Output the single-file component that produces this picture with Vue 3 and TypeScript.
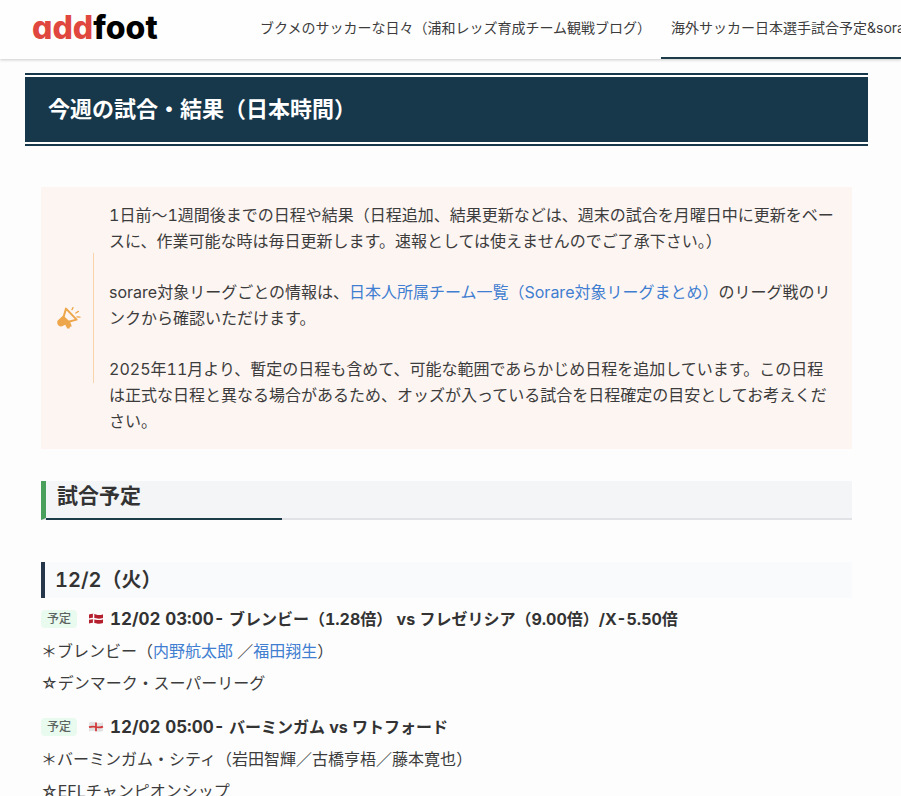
<script setup lang="ts">
interface Player {
  name: string
  href?: string
  after?: string
}

interface Match {
  id: number
  status: string
  flag: 'denmark' | 'england'
  kickoff: string
  title: string
  team: string
  players: Player[]
  league: string
}

const navItems = [
  { label: 'ブクメのサッカーな日々（浦和レッズ育成チーム観戦ブログ）', current: false },
  { label: '海外サッカー日本選手試合予定&sorare', current: true },
]

const matches: Match[] = [
  {
    id: 1,
    status: '予定',
    flag: 'denmark',
    kickoff: '12/02 03:00-',
    title: 'ブレンビー（1.28倍） vs フレゼリシア（9.00倍）/X-5.50倍',
    team: 'ブレンビー',
    players: [
      { name: '内野航太郎', href: '#uchino', after: ' ／' },
      { name: '福田翔生', href: '#fukuda' },
    ],
    league: 'デンマーク・スーパーリーグ',
  },
  {
    id: 2,
    status: '予定',
    flag: 'england',
    kickoff: '12/02 05:00-',
    title: 'バーミンガム vs ワトフォード',
    team: 'バーミンガム・シティ',
    players: [
      { name: '岩田智輝', after: '／' },
      { name: '古橋亨梧', after: '／' },
      { name: '藤本寛也' },
    ],
    league: 'EFLチャンピオンシップ',
  },
]
</script>

<template>
  <div class="page">
    <header class="site-header">
      <a class="logo" href="#top"><span class="logo-accent">add</span>foot</a>
      <nav class="nav">
        <a
          v-for="item in navItems"
          :key="item.label"
          href="#nav"
          class="nav-link"
          :class="{ current: item.current }"
        >{{ item.label }}</a>
      </nav>
    </header>

    <main class="main">
      <h1 class="title">今週の試合・結果（日本時間）</h1>

      <div class="content">
        <section class="notice">
          <div class="notice-icon">
            <svg width="24" height="22" viewBox="0 0 24 22" aria-hidden="true">
              <path
                d="M9 1.6 L19.6 12.6 L11.5 14.8 L6.5 10.2 Z"
                fill="none" stroke="#eda64b" stroke-width="2" stroke-linejoin="round"
              />
              <path d="M6.2 8.6 L12.8 15.4 L6.6 18.6 Q3.6 20.6 1.6 18.6 Q-0.6 16.2 0.7 13.4 Z" fill="#eda64b" />
              <path d="M7.6 16.6 L13 14.4 L14.8 19.2 L12.8 20 L12.6 21.6 L10.2 21.4 Z" fill="#eda64b" />
              <path
                d="M16 0.6 L15 2.6 M21.4 4.4 L18.8 6 M20 9.8 L23 10.2"
                fill="none" stroke="#eda64b" stroke-width="1.3" stroke-linecap="round"
              />
            </svg>
          </div>
          <div class="notice-text">
            <p>1日前〜1週間後までの日程や結果（日程追加、結果更新などは、週末の試合を月曜日中に更新をベースに、作業可能な時は毎日更新します。速報としては使えませんのでご了承下さい。）</p>
            <p>sorare対象リーグごとの情報は、<a href="#teams">日本人所属チーム一覧（Sorare対象リーグまとめ）</a>のリーグ戦のリンクから確認いただけます。</p>
            <p>2025年11月より、暫定の日程も含めて、可能な範囲であらかじめ日程を追加しています。この日程は正式な日程と異なる場合があるため、オッズが入っている試合を日程確定の目安としてお考えください。</p>
          </div>
        </section>

        <h2 class="section-title">試合予定</h2>
        <h3 class="date-title">12/2（火）</h3>

        <article v-for="match in matches" :key="match.id" class="match">
          <h4 class="match-title">
            <span class="badge">{{ match.status }}</span>
            <svg v-if="match.flag === 'denmark'" class="flag" width="16" height="12" viewBox="0 0 16 12" role="img" aria-label="デンマーク">
              <path d="M1 1.6 Q4.5 0 8 1.4 T15 1.2 V10 Q11.5 11.4 8 10.2 T1 10.6 Z" fill="#b5202f" />
              <path d="M5.6 1 V10.2 M1 6.2 Q4.5 5 8 6 T15 5.6" fill="none" stroke="#fff" stroke-width="1.4" />
            </svg>
            <svg v-else class="flag" width="16" height="12" viewBox="0 0 16 12" role="img" aria-label="イングランド">
              <path d="M1 1.6 Q4.5 0 8 1.4 T15 1.2 V10 Q11.5 11.4 8 10.2 T1 10.6 Z" fill="#e2e2e2" />
              <path d="M8 1.4 V10.2 M1 6.2 Q4.5 5 8 6 T15 5.6" fill="none" stroke="#d23a3a" stroke-width="1.8" />
            </svg>
            <span class="match-name"><time class="kickoff">{{ match.kickoff }}</time> {{ match.title }}</span>
          </h4>
          <p class="line">＊{{ match.team }}（<template v-for="player in match.players" :key="player.name"><a v-if="player.href" :href="player.href">{{ player.name }}</a><template v-else>{{ player.name }}</template>{{ player.after }}</template>）</p>
          <p class="line">☆{{ match.league }}</p>
        </article>
      </div>
    </main>
  </div>
</template>

<style>
body {
  background: #fdfdfd;
}
</style>

<style scoped>
.page {
  height: 100vh;
  overflow: hidden;
  color: #3c3c3c;
  font-family: Inter, "Noto Sans CJK JP", sans-serif;
  font-size: 16px;
  font-variant-numeric: tabular-nums;
  line-height: 26px;
}

h1,
h2,
h3,
h4,
p {
  margin: 0;
}

a {
  color: #3f7ed0;
  text-decoration: none;
}

.site-header {
  display: flex;
  align-items: stretch;
  height: 59px;
  padding-left: 32px;
  overflow: clip;
  overflow-clip-margin: 4px;
  background: #fefefe;
  box-shadow: 0 1px 3px rgba(0, 0, 0, 0.2);
}

.logo {
  flex: none;
  width: 218px;
  color: #000;
  font-size: 32px;
  font-weight: 800;
  font-feature-settings: "cv11";
  line-height: 56px;
}

.logo-accent {
  color: #e0473f;
}

.nav {
  display: flex;
  flex: none;
}

.nav-link {
  box-sizing: border-box;
  padding: 0 10px;
  border-bottom: 2px solid transparent;
  color: #3c3c3c;
  font-size: 14px;
  line-height: 56px;
  white-space: nowrap;
}

.nav-link.current {
  border-bottom-color: #1b3c48;
}

.main {
  padding: 14px 33px 0 25px;
}

.title {
  padding: 20px 23px;
  border-top: 2px solid #17374b;
  border-bottom: 2px solid #17374b;
  box-shadow: inset 0 2px #fff, inset 0 -2px #fff;
  background: #17374b;
  color: #fff;
  font-size: 22px;
  line-height: 29px;
}

.content {
  padding: 41px 16px 0;
}

.notice {
  display: flex;
  align-items: center;
  padding: 15px 16px;
  background: #fdf5f2;
}

.notice-icon {
  display: flex;
  flex: none;
  align-items: center;
  height: 130px;
  padding-right: 12px;
  margin-right: 15px;
  border-right: 1px solid #f8d3ab;
}

.notice-text {
  display: grid;
  flex: 1;
  gap: 25px;
}

.section-title {
  position: relative;
  margin-top: 32px;
  padding: 0 11px 8px;
  border-bottom: 2px solid #e0e2e5;
  border-left: 5px solid #48a05b;
  background: #f4f5f7;
  font-size: 21px;
  line-height: 29px;
  color: #333;
}

.section-title::after {
  position: absolute;
  bottom: -2px;
  left: 0;
  width: 236px;
  height: 2px;
  background: #1b3c48;
  content: "";
}

.date-title {
  margin: 42px 0 5px;
  padding: 4px 10px;
  border-left: 4px solid #25364a;
  background: #f9fafc;
  font-size: 20px;
  font-weight: 600;
  line-height: 28px;
  color: #333;
}

.match {
  margin-bottom: 12px;
  line-height: 32px;
}

.match-title {
  display: flex;
  align-items: center;
  color: #333;
  font-size: 16px;
  font-weight: 700;
  line-height: 32px;
}

.kickoff {
  font-size: 17px;
}

.badge {
  margin-right: 11px;
  padding: 0 6px;
  border-radius: 4px;
  background: #e9faef;
  color: #5c645f;
  font-size: 12px;
  font-weight: 500;
  line-height: 18px;
}

.flag {
  flex: none;
  margin-right: 6px;
}
</style>
